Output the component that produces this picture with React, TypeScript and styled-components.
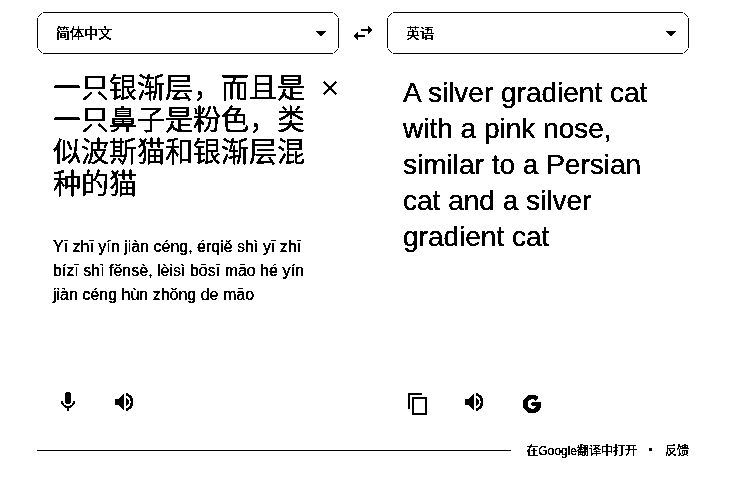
import * as React from 'react';
import styled, { createGlobalStyle } from 'styled-components';
import { FaGoogle } from 'react-icons/fa';

const GlobalStyle = createGlobalStyle`
  html, body {
    margin: 0;
    padding: 0;
    background: #fff;
    color: #000;
    font-family: "Liberation Sans", "Noto Sans CJK SC", sans-serif;
  }
`

const Page = styled.div`
  width: 736px;
  height: 487px;
  box-sizing: border-box;
  padding: 12px 47px 0 37px;
  display: flex;
  flex-direction: column;
  background: #fff;
  filter: url(#mono);
`

const Columns = styled.div`
  display: flex;
  height: 422px;
`

const Column = styled.div`
  width: 302px;
  display: flex;
  flex-direction: column;
`

const SwapGap = styled.div`
  width: 48px;
  height: 42px;
  display: flex;
  align-items: center;
  justify-content: center;
`

const Select = styled.div`
  height: 42px;
  box-sizing: border-box;
  border: 1px solid #9c9c9c;
  border-radius: 8px;
  padding: 0 12px 2px 18px;
  display: flex;
  align-items: center;
  justify-content: space-between;
  font-size: 14px;
  flex-shrink: 0;
`

const Arrow = styled.span`
  width: 0;
  height: 0;
  margin-top: 2px;
  border-left: 5px solid transparent;
  border-right: 5px solid transparent;
  border-top: 5px solid #000;
`

const Body = styled.div<{ $right?: boolean }>`
  flex: 1;
  display: flex;
  gap: 13px;
  padding: ${p => (p.$right ? '21px 16px 0' : '19px 0 0 16px')};
  align-items: flex-start;
`

const SourceColumn = styled.div`
  width: 252px;
  flex-shrink: 0;
`

const SourceText = styled.div`
  font-size: 28px;
  line-height: 32px;
`

const Pinyin = styled.div`
  margin-top: 34px;
  font-size: 16px;
  line-height: 24px;
`

const TargetText = styled.div`
  font-size: 28px;
  line-height: 36px;
`

const Close = styled.svg`
  width: 24px;
  height: 24px;
  margin-top: 3px;
  flex-shrink: 0;
`

const Tools = styled.div<{ $right?: boolean }>`
  height: 44px;
  display: flex;
  align-items: flex-start;
  gap: 32px;
  padding: ${p => (p.$right ? '15px 0 0 19px' : '14px 0 0 19px')};
`

const Icon = styled.svg<{ $down?: boolean; $heavy?: boolean }>`
  width: 24px;
  height: 24px;
  flex-shrink: 0;
  margin-top: ${p => (p.$down ? '2px' : '0')};
  stroke: ${p => (p.$heavy ? '#000' : 'none')};
  stroke-width: 0.25;
`

const GoogleSlot = styled.span`
  width: 24px;
  height: 24px;
  margin: 2px 0 0 2px;
  display: flex;
  align-items: center;
  justify-content: center;
  font-size: 18px;

  svg {
    stroke: #000;
    stroke-width: 24;
  }
`

const Footer = styled.div`
  display: flex;
  align-items: center;
  margin-top: 5px;
  font-size: 12px;
  height: 20px;
`

const Rule = styled.div`
  flex: 1;
  height: 1px;
  margin-top: 2px;
  background: #000;
  margin-right: 15px;
`

const Dot = styled.span`
  width: 3px;
  height: 3px;
  background: #000;
  border-radius: 50%;
  margin: 0 13px 0 12px;
`

const MIC = 'M12 14c1.66 0 2.99-1.34 2.99-3L15 5c0-1.66-1.34-3-3-3S9 3.34 9 5v6c0 1.66 1.34 3 3 3zm5.3-3c0 3-2.54 5.1-5.3 5.1S6.7 14 6.7 11H5c0 3.41 2.72 6.23 6 6.72V21h2v-3.28c3.28-.48 6-3.3 6-6.72h-1.7z'
const SPEAKER = 'M3 9v6h4l5 5V4L7 9H3zm13.5 3c0-1.77-1.02-3.29-2.5-4.03v8.05c1.48-.73 2.5-2.25 2.5-4.02zM14 3.23v2.06c2.89.86 5 3.54 5 6.71s-2.11 5.85-5 6.71v2.06c4.01-.91 7-4.49 7-8.77 0-4.28-2.99-7.86-7-8.77z'
const COPY = 'M16 1H4c-1.1 0-2 .9-2 2v14h2V3h12V1zm3 4H8c-1.1 0-2 .9-2 2v14c0 1.1.9 2 2 2h11c1.1 0 2-.9 2-2V7c0-1.1-.9-2-2-2zm0 16H8V7h11v14z'
const SWAP = 'M6.99 11L3 15l3.99 4v-3H14v-2H6.99v-3zM21 9l-3.99-4v3H10v2h7.01v3L21 9z'
const CLOSE = 'M19 6.41L17.59 5 12 10.59 6.41 5 5 6.41 10.59 12 5 17.59 6.41 19 12 13.41 17.59 19 19 17.59 13.41 12z'

const SOURCE = '一只银渐层\uFF0C而且是一只鼻子是粉色\uFF0C类似波斯猫和银渐层混种的猫'

const App: React.FunctionComponent = () => {
  return (
    <>
      <GlobalStyle />
      <svg width="0" height="0" style={{ position: 'absolute' }}>
        <filter id="mono" colorInterpolationFilters="sRGB">
          <feColorMatrix type="saturate" values="0" />
          <feComponentTransfer>
            <feFuncR type="discrete" tableValues="0 0 0 1" />
            <feFuncG type="discrete" tableValues="0 0 0 1" />
            <feFuncB type="discrete" tableValues="0 0 0 1" />
          </feComponentTransfer>
        </filter>
      </svg>
      <Page>
        <Columns>
          <Column>
            <Select>简体中文<Arrow /></Select>
            <Body>
              <SourceColumn>
                <SourceText>{SOURCE}</SourceText>
                <Pinyin>Yī zhī yín jiàn céng, érqiě shì yī zhī bízī shì fěnsè, lèisì bōsī māo hé yín jiàn céng hùn zhǒng de māo</Pinyin>
              </SourceColumn>
              <Close viewBox="0 0 24 24"><path d={CLOSE} /></Close>
            </Body>
            <Tools>
              <Icon viewBox="0 0 24 24"><path d={MIC} /></Icon>
              <Icon $heavy viewBox="0 0 24 24"><path d={SPEAKER} /></Icon>
            </Tools>
          </Column>
          <SwapGap>
            <Icon viewBox="0 0 24 24"><path d={SWAP} /></Icon>
          </SwapGap>
          <Column>
            <Select>英语<Arrow /></Select>
            <Body $right>
              <TargetText>A silver gradient cat with a pink nose, similar to a Persian cat and a silver gradient cat</TargetText>
            </Body>
            <Tools $right>
              <Icon $down viewBox="0 0 24 24"><path d={COPY} /></Icon>
              <Icon $heavy viewBox="0 0 24 24"><path d={SPEAKER} /></Icon>
              <GoogleSlot><FaGoogle /></GoogleSlot>
            </Tools>
          </Column>
        </Columns>
        <Footer>
          <Rule />
          <span>在Google翻译中打开</span>
          <Dot />
          <span>反馈</span>
        </Footer>
      </Page>
    </>
  );
};

export default App;
